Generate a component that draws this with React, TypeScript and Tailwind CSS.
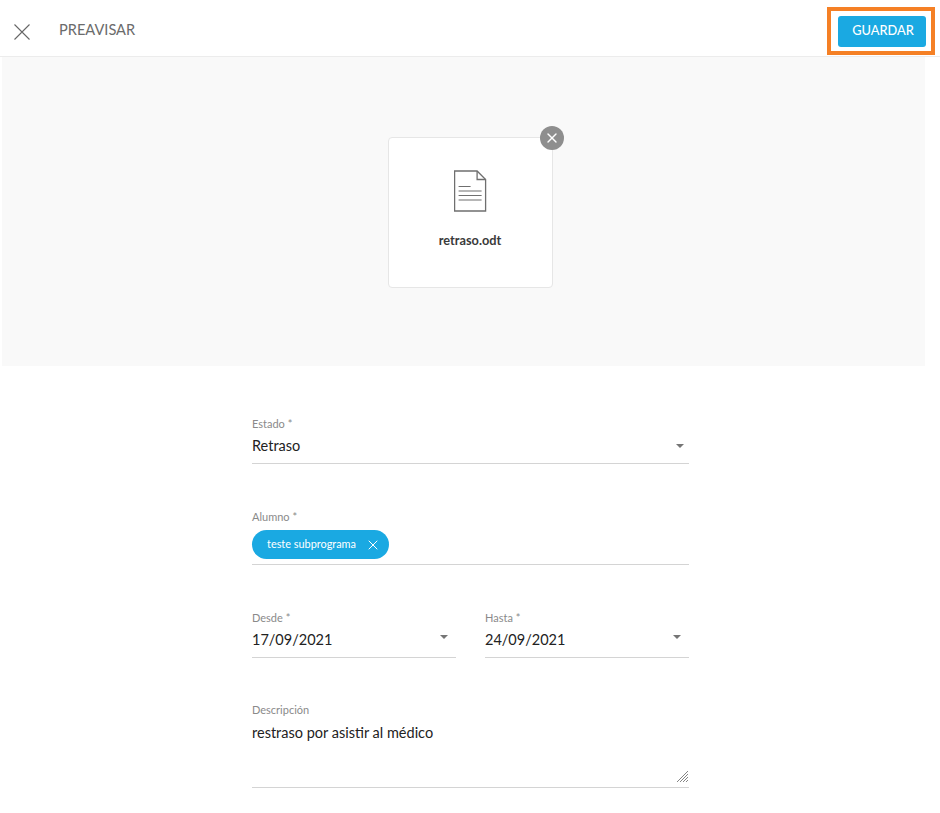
import { X } from "lucide-react";

function SelectField({
  label,
  value,
  className,
  rowClass,
  caretClass,
}: {
  label: string;
  value: string;
  className?: string;
  rowClass: string;
  caretClass: string;
}) {
  return (
    <div className={className}>
      <div className="text-[11px] leading-[14px] text-[#8a8a8a]">{label}</div>
      <div className={`flex items-center justify-between border-b border-[#d4d4d4] pb-[6px] ${rowClass}`}>
        <span className="text-[14.5px] leading-[22px] text-[#222222]">{value}</span>
        <svg width="8" height="4" viewBox="0 0 8 4" className={`shrink-0 ${caretClass}`}>
          <path d="M0 0h8L4 4z" fill="#757575" />
        </svg>
      </div>
    </div>
  );
}

export default function App() {
  return (
    <div className="relative h-[813px] w-[940px] overflow-hidden bg-white font-['Lato',sans-serif]">
      {/* top bar */}
      <header className="flex h-[57px] items-center justify-between border-b border-[#ececec] px-[14px]">
        <div className="flex items-center">
          <svg width="16" height="16" viewBox="0 0 16 16" className="mt-[8px]">
            <path d="M.5 .5l15 15M15.500 .5l-15 15" stroke="#666666" strokeWidth="1.1" fill="none" />
          </svg>
          <span className="ml-[29px] mt-[4px] text-[14.600px] text-[#6b6b6b]">PREAVISAR</span>
        </div>
        <button className="mt-[6px] h-[31px] w-[88px] rounded-[3px] bg-[#1aa9e2] pl-[2px] text-[12.800px] font-medium text-white">
          GUARDAR
        </button>
      </header>

      {/* highlight around the save button */}
      <div className="absolute left-[827px] top-[7px] h-[48px] w-[108px] border-[4px] border-[#f58025]" />

      {/* attachment area */}
      <section className="ml-[2px] flex h-[309px] w-[923px] justify-center bg-[#f9f9f9] pl-[13px] pt-[80px]">
        <div className="relative flex h-[151px] w-[165px] flex-col items-center rounded-[4px] border border-[#e6e6e6] bg-white pt-[32px]">
          <div className="absolute -right-[12px] -top-[12px] flex h-[24px] w-[24px] items-center justify-center rounded-full bg-[#8e8e8e]">
            <X size={16} strokeWidth={2} color="#ffffff" />
          </div>
          <svg width="33" height="42" viewBox="0 0 33 42" fill="none" stroke="#6f6f6f">
            <path d="M.6 1h22.500l8.500 8.500V41H.6z" strokeWidth="1.300" />
            <path d="M23.100 1v8.500h8.500" strokeWidth="1.300" />
            <path d="M4.600 16.500h12" strokeWidth="1" />
            <path d="M4.600 21h23M4.600 25.500h23M4.600 30h23" strokeWidth="1.200" />
          </svg>
          <div className="mt-[18px] text-[12.750px] font-bold leading-[20px] text-[#3a3a3a]">retraso.odt</div>
        </div>
      </section>

      {/* form */}
      <form className="ml-[252px] w-[437px] pt-[51px]">
        <SelectField
          label="Estado *"
          value="Retraso"
          rowClass="mt-[3px] h-[30px] pr-[5px]"
          caretClass="mt-[1px]"
        />

        <div className="mt-[46px]">
          <div className="text-[11px] leading-[14px] text-[#8a8a8a]">Alumno *</div>
          <div className="mt-[6px] border-b border-[#d4d4d4] pb-[5px]">
            <span className="flex h-[29px] w-[137px] items-center justify-between rounded-full bg-[#1aa9e2] pl-[15px] pr-[8px] text-[10.900px] text-white">
              teste subprograma
              <X size={16} strokeWidth={1.5} color="#ffffff" />
            </span>
          </div>
        </div>

        <div className="mt-[46px] flex justify-between">
          <SelectField
            label="Desde *"
            value="17/09/2021"
            className="w-[204px]"
            rowClass="mt-[3px] h-[30px] pr-[8px]"
            caretClass="-mt-[5px]"
          />
          <SelectField
            label="Hasta *"
            value="24/09/2021"
            className="w-[204px]"
            rowClass="mt-[3px] h-[30px] pr-[8px]"
            caretClass="-mt-[5px]"
          />
        </div>

        <div className="mt-[45px]">
          <div className="text-[11px] leading-[14px] text-[#8a8a8a]">Descripción</div>
          <div className="relative mt-[1px] h-[70px] border-b border-[#d4d4d4] pt-[4px] text-[14.500px] leading-[22px] text-[#222222]">
            restraso por asistir al médico
            <svg width="13" height="13" viewBox="0 0 13 13" className="absolute bottom-[4px] right-0" stroke="#777777" strokeWidth="0.9">
              <path d="M1 12L12 1M4 12l8-8M7 12l5-5M10 12l2-2" />
            </svg>
          </div>
        </div>
      </form>
    </div>
  );
}
